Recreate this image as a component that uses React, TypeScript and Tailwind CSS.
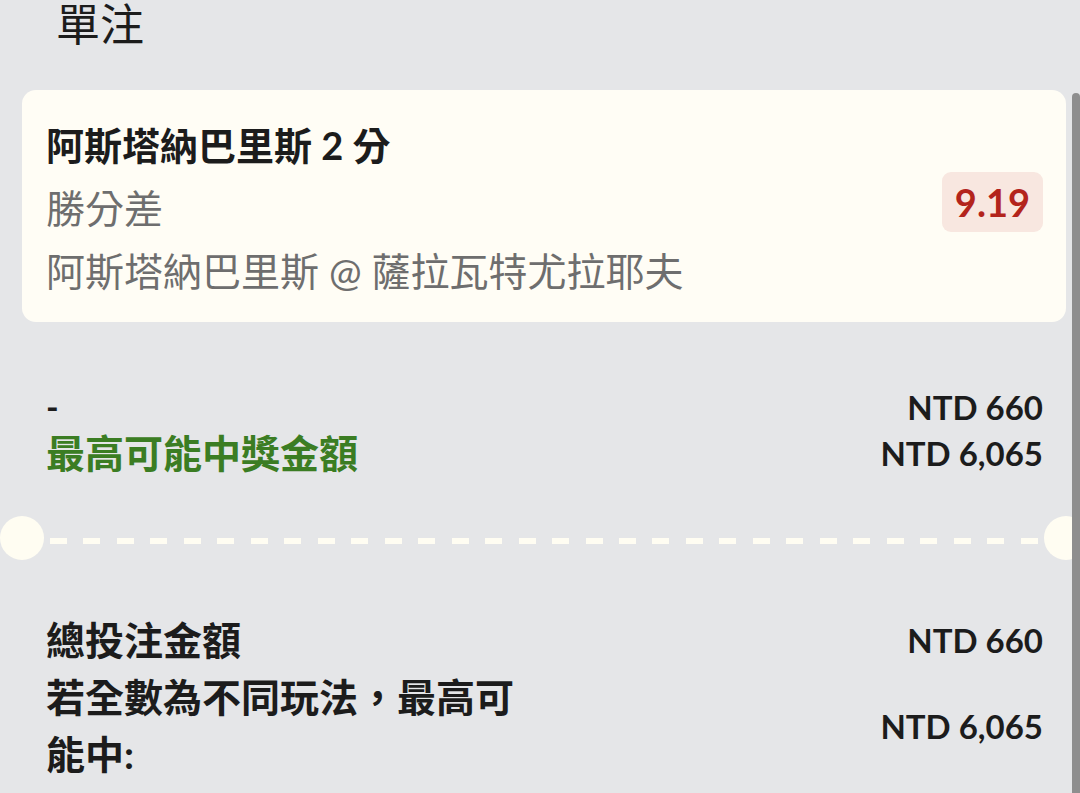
import React from "react";

const font = { fontFamily: 'Lato, "Noto Sans CJK TC", sans-serif' };

export default function App() {
    const dashes = Array.from({ length: 30 });

    return (
        <div className="relative w-[1080px] h-[793px] overflow-hidden bg-[#e5e6e8] text-[#1c1c1c]" style={font}>
            {/* Header */}
            <div className="h-[48px] leading-[48px] pl-[56px] text-[44px] font-normal">單注</div>

            {/* Bet card */}
            <div className="mt-[42px] ml-[22px] mr-[14px] rounded-[14px] bg-[#fffdf5] pl-[24px] pr-[23px] pt-[24px] pb-[19px] flex items-center justify-between">
                <div className="text-[39px] leading-[63px]">
                    <div className="text-[38px] font-bold">阿斯塔納巴里斯 2 分</div>
                    <div className="text-[#6e6e6e]">勝分差</div>
                    <div className="text-[#6e6e6e]">阿斯塔納巴里斯 @ 薩拉瓦特尤拉耶夫</div>
                </div>
                <div className="mb-[14px] h-[60px] px-[13px] rounded-[9px] bg-[#f8e7e0] text-[#b3241c] text-[38px] font-bold leading-[60px]">
                    9.19
                </div>
            </div>

            {/* Potential win */}
            <div className="mt-[62px] pl-[46px] pr-[37px] leading-[46px]">
                <div className="flex justify-between items-center">
                    <span className="text-[34px] font-bold">-</span>
                    <span className="text-[33px] font-bold">NTD 660</span>
                </div>
                <div className="flex justify-between items-center">
                    <span className="text-[39px] font-bold text-[#3b7d23]">最高可能中獎金額</span>
                    <span className="text-[33px] font-bold">NTD 6,065</span>
                </div>
            </div>

            {/* Ticket divider */}
            <div className="mt-[40px] w-[1088px] h-[44px] flex items-center">
                <div className="w-[44px] h-[44px] rounded-full bg-[#fffdf2] shrink-0" />
                <div className="flex-1 mx-[6px] mt-[5px] flex justify-between">
                    {dashes.map((_, i) => (
                        <div key={i} className="w-[17px] h-[6px] bg-[#fffdf2]" />
                    ))}
                </div>
                <div className="w-[44px] h-[44px] rounded-full bg-[#fffdf2] shrink-0" />
            </div>

            {/* Totals */}
            <div className="mt-[52px] pl-[46px] pr-[37px] leading-[57px]">
                <div className="flex justify-between items-center">
                    <span className="text-[39px] font-bold">總投注金額</span>
                    <span className="text-[33px] font-bold">NTD 660</span>
                </div>
                <div className="flex justify-between items-center">
                    <span className="w-[490px] text-[39px] font-bold">若全數為不同玩法，最高可能中:</span>
                    <span className="text-[33px] font-bold">NTD 6,065</span>
                </div>
            </div>

            {/* Scrollbar thumb */}
            <div className="absolute top-[93px] right-0 bottom-0 w-[8px] rounded-t-full bg-[#8e8e8e]" />
        </div>
    );
}
